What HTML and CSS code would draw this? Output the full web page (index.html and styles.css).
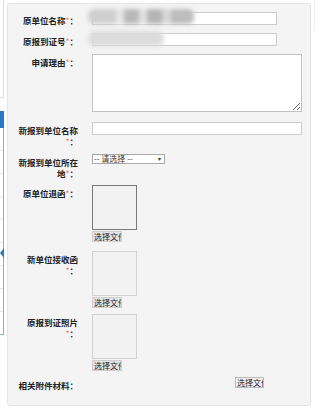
FILE: index.html
```html
<!DOCTYPE html>
<html lang="zh-CN">
<head>
    <meta charset="UTF-8">
    <meta name="viewport" content="width=device-width, initial-scale=1.0">
    <title>报到证改派申请</title>
    <link rel="stylesheet" href="styles.css">
</head>
<body>
    <div class="side">
        <div class="side-top"></div>
        <div class="side-head"></div>
        <ul class="side-list">
            <li></li><li></li><li></li><li></li><li></li>
            <li class="current"></li><li></li><li></li><li></li>
        </ul>
    </div>

    <form class="panel" id="applyForm">
        <div class="row">
            <label class="label" for="oldUnit">原单位名称<span class="req">*</span>：</label>
            <div class="field">
                <input type="text" id="oldUnit" class="text short">
                <div class="redact redact-a"></div>
            </div>
        </div>
        <div class="row">
            <label class="label" for="oldNo">原报到证号<span class="req">*</span>：</label>
            <div class="field">
                <input type="text" id="oldNo" class="text short">
                <div class="redact redact-b"></div>
            </div>
        </div>
        <div class="row gap-10">
            <label class="label" for="reason">申请理由<span class="req">*</span>：</label>
            <div class="field">
                <textarea id="reason" class="area"></textarea>
            </div>
        </div>
        <div class="row">
            <label class="label" for="newUnit">新报到单位名称<span class="req">*</span>：</label>
            <div class="field">
                <input type="text" id="newUnit" class="text long">
            </div>
        </div>
        <div class="row gap-6">
            <label class="label">新报到单位所在地<span class="req">*</span>：</label>
            <div class="field">
                <div class="select"><span>-- 请选择 --</span><span class="caret">▾</span></div>
            </div>
        </div>
        <div class="row gap-9">
            <label class="label">原单位退函<span class="req">*</span>：</label>
            <div class="field">
                <div class="thumb active"></div>
                <span class="file-btn">选择文件</span>
            </div>
        </div>
        <div class="row gap-6">
            <label class="label">新单位接收函<span class="req">*</span>：</label>
            <div class="field">
                <div class="thumb"></div>
                <span class="file-btn">选择文件</span>
            </div>
        </div>
        <div class="row gap-6">
            <label class="label">原报到证照片<span class="req">*</span>：</label>
            <div class="field">
                <div class="thumb"></div>
                <span class="file-btn">选择文件</span>
            </div>
        </div>
        <div class="row last">
            <label class="label">相关附件材料：</label>
            <div class="field">
                <span class="file-btn attach">选择文件</span>
            </div>
        </div>
    </form>

    <div class="right-edge"></div>
</body>
</html>
```

FILE: styles.css
```css
body {
    font-family: "Noto Sans CJK SC", "Liberation Sans", sans-serif;
    margin: 0;
    padding: 0;
    background-color: #ffffff;
    display: flex;
    align-items: flex-start;
    color: #333333;
}

/* left edge of the sidebar behind */
.side {
    width: 4px;
    flex-shrink: 0;
}
.side-top {
    height: 98px;
    border-right: 1px solid #dddddd;
    border-bottom: 1px solid #dddddd;
    box-sizing: border-box;
}
.side-head {
    margin-top: 13px;
    height: 17px;
    background-color: #2b78bf;
}
.side-list {
    list-style: none;
    margin: 0;
    padding: 0;
    border-right: 1px solid #7eb1de;
    border-bottom: 1px solid #7eb1de;
}
.side-list li {
    height: 22px;
    border-bottom: 1px solid #e6e6e6;
    position: relative;
}
.side-list li:last-child {
    border-bottom: none;
}
.side-list li.current::after {
    content: "";
    position: absolute;
    right: -1px;
    top: 5px;
    border-top: 5px solid transparent;
    border-bottom: 5px solid transparent;
    border-right: 4px solid #2b78bf;
}

.panel {
    margin: 3px 0 0 3px;
    width: 305px;
    height: 403px;
    box-sizing: border-box;
    padding: 8px 0 0 9px;
    background-color: #f4f4f4;
    border: 1px solid #e4e4e4;
    border-radius: 3px;
}

.right-edge {
    margin-left: 3px;
    width: 3px;
    height: 30px;
    border-left: 1px solid #eeeeee;
}

.row {
    display: grid;
    grid-template-columns: 61px auto;
    column-gap: 14px;
    margin-bottom: 7px;
}
.row.gap-10 {
    margin-bottom: 10px;
}
.row.gap-9 {
    margin-bottom: 9px;
}
.row.gap-6 {
    margin-bottom: 6px;
}
.row.last {
    margin-bottom: 0;
}

.label {
    text-align: right;
    font-size: 8.5px;
    line-height: 11px;
    font-weight: bold;
    padding-top: 3px;
    color: #222222;
}
.req {
    color: #f07a5a;
    font-weight: normal;
}

.field {
    position: relative;
}

.text {
    display: block;
    box-sizing: border-box;
    height: 13px;
    margin: 0;
    padding: 0 2px;
    border: 1px solid #cccccc;
    background-color: #ffffff;
    font-size: 8px;
}
.text.short {
    width: 185px;
}
.text.long {
    width: 210px;
}

.area {
    display: block;
    box-sizing: border-box;
    width: 210px;
    height: 58px;
    margin: 0;
    padding: 2px;
    border: 1px solid #c2c2c2;
    background-color: #ffffff;
    font-size: 8px;
}

.redact {
    position: absolute;
    filter: blur(2px);
    pointer-events: none;
}
.redact-a {
    left: -4px;
    top: -3px;
    width: 106px;
    height: 15px;
    background:
        linear-gradient(90deg, #cfcfcf 0, #cfcfcf 26%, #e6e6e6 26%, #e6e6e6 34%, #b9b9b9 34%, #b9b9b9 48%, #e2e2e2 48%, #e2e2e2 56%, #b5b5b5 56%, #b5b5b5 70%, #d8d8d8 70%, #d8d8d8 78%, #bdbdbd 78%, #bdbdbd 100%);
    border-radius: 6px;
}
.redact-b {
    left: -4px;
    top: -2px;
    width: 76px;
    height: 15px;
    background-color: #dcdcdc;
    border-radius: 7px;
}

.select {
    display: flex;
    justify-content: space-between;
    align-items: center;
    box-sizing: border-box;
    width: 73px;
    height: 10px;
    padding: 0 3px 0 1px;
    border: 1px solid #a9a9a9;
    background-color: #ffffff;
    font-size: 8px;
    line-height: 8px;
    color: #333333;
}
.caret {
    font-size: 6px;
}

.thumb {
    width: 45px;
    height: 45px;
    box-sizing: border-box;
    border: 1px solid #d2d2d2;
    background-color: #f2f2f2;
}
.thumb.active {
    border-color: #7a7a7a;
}

.file-btn {
    display: block;
    width: 30px;
    height: 11px;
    margin-top: 1px;
    box-sizing: border-box;
    overflow: hidden;
    white-space: nowrap;
    padding-left: 1px;
    font-size: 8px;
    line-height: 10px;
    color: #222222;
    background-color: #e3e3e3;
    border: 1px solid #cfcfcf;
}
.file-btn.attach {
    width: 29px;
    margin-top: 0;
    margin-left: 143px;
    background-color: #f0f0f0;
    border-color: #bdbdbd;
}
```
